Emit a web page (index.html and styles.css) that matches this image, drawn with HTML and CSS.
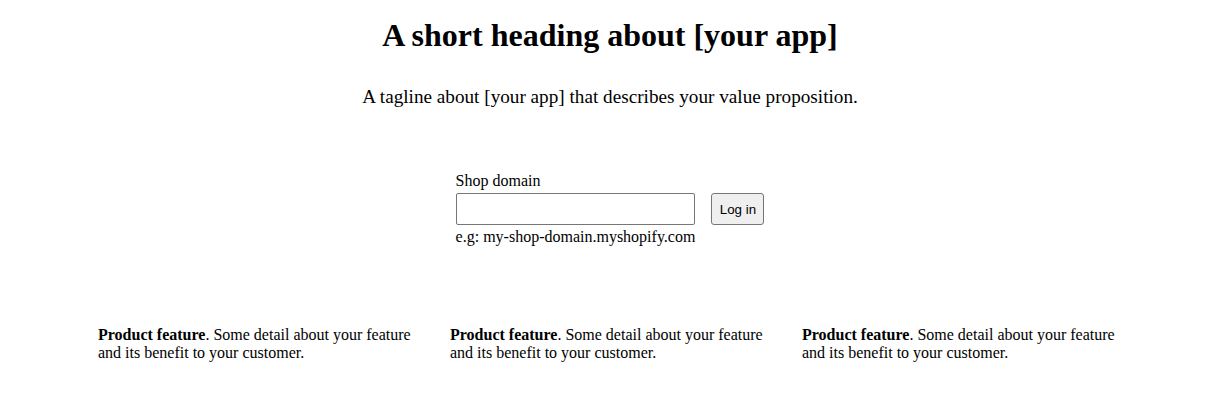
FILE: index.html
```html
<!DOCTYPE html>
<html lang="en">
<head>
<meta charset="utf-8">
<title>App</title>
<link rel="stylesheet" href="styles.css">
</head>
<body>
<div class="index">
  <div class="content">
    <h1 class="heading">A short heading about [your app]</h1>
    <p class="text">A tagline about [your app] that describes your value proposition.</p>
    <form class="form" method="post" action="/auth/login">
      <label class="label">
        <span>Shop domain</span>
        <input class="input" type="text" name="shop">
        <span>e.g: my-shop-domain.myshopify.com</span>
      </label>
      <button class="button" type="submit">Log in</button>
    </form>
    <ul class="list">
      <li><strong>Product feature</strong>. Some detail about your feature and its benefit to your customer.</li>
      <li><strong>Product feature</strong>. Some detail about your feature and its benefit to your customer.</li>
      <li><strong>Product feature</strong>. Some detail about your feature and its benefit to your customer.</li>
    </ul>
  </div>
</div>
</body>
</html>
```
FILE: styles.css
```css
html, body {
  margin: 0;
  padding: 0;
  background: #fff;
  color: #000;
  font-family: "Liberation Serif", "Times New Roman", serif;
  font-size: 16px;
}

.index {
  display: flex;
  justify-content: center;
  text-align: center;
  padding: 17px 0 0 7px;
}

.content {
  display: grid;
  gap: 2rem;
}

.heading,
.text {
  margin: 0;
  padding: 0;
}

.heading {
  font-size: 2rem;
  font-weight: bold;
}

.text {
  font-size: 1.2rem;
  padding-bottom: 2rem;
}

.form {
  display: flex;
  align-items: center;
  justify-content: flex-start;
  margin: 0 auto;
  gap: 1rem;
}

.label {
  display: grid;
  gap: 0.2rem;
  max-width: 20rem;
  text-align: left;
  font-size: 1rem;
}

.input {
  width: 239px;
  height: 32px;
  box-sizing: border-box;
  padding: 0.4rem;
  border: 1px solid #767676;
  border-radius: 2px;
  font-family: "Liberation Sans", Arial, sans-serif;
  font-size: 13.33px;
}

.button {
  width: 53px;
  height: 32px;
  box-sizing: border-box;
  padding: 0.4rem;
  border: 1px solid #767676;
  border-radius: 3px;
  background: #efefef;
  font-family: "Liberation Sans", Arial, sans-serif;
  font-size: 13.33px;
  color: #000;
}

.list {
  list-style: none;
  margin: 0;
  padding: 3rem 0 0 0;
  display: flex;
  gap: 2rem;
}

.list > li {
  max-width: 20rem;
  text-align: left;
}
```
